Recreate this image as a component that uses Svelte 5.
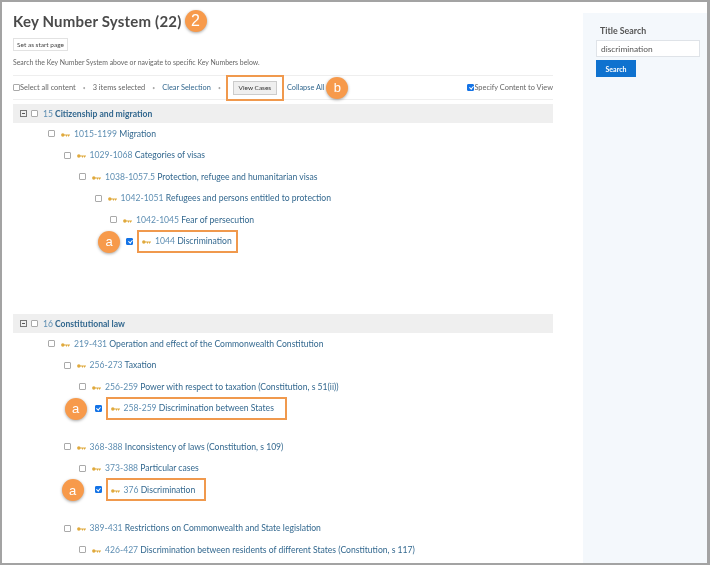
<script>
  const sections = [
    {
      num: "15",
      title: "Citizenship and migration",
      gapAfter: "wide",
      rows: [
        { level: 1, num: "1015-1199", label: "Migration" },
        { level: 2, num: "1029-1068", label: "Categories of visas" },
        { level: 3, num: "1038-1057.5", label: "Protection, refugee and humanitarian visas" },
        { level: 4, num: "1042-1051", label: "Refugees and persons entitled to protection" },
        { level: 5, num: "1042-1045", label: "Fear of persecution" },
        { level: 6, num: "1044", label: "Discrimination", checked: true, boxWidth: 101, badgeLeft: -41 }
      ]
    },
    {
      num: "16",
      title: "Constitutional law",
      rows: [
        { level: 1, num: "219-431", label: "Operation and effect of the Commonwealth Constitution" },
        { level: 2, num: "256-273", label: "Taxation" },
        { level: 3, num: "256-259", label: "Power with respect to taxation (Constitution, s 51(ii))" },
        { level: 4, num: "258-259", label: "Discrimination between States", checked: true, boxWidth: 181, badgeLeft: -43, spaced: true },
        { level: 2, num: "368-388", label: "Inconsistency of laws (Constitution, s 109)" },
        { level: 3, num: "373-388", label: "Particular cases" },
        { level: 4, num: "376", label: "Discrimination", checked: true, boxWidth: 100, badgeLeft: -46, spaced: true },
        { level: 2, num: "389-431", label: "Restrictions on Commonwealth and State legislation" },
        { level: 3, num: "426-427", label: "Discrimination between residents of different States (Constitution, s 117)" }
      ]
    }
  ];
</script>

{#snippet key()}
  <svg class="key" width="9" height="6" viewBox="0 0 9 6" aria-hidden="true">
    <circle cx="1.8" cy="3" r="1.7" fill="#e0a93c" />
    <path d="M3 2.4h6v1.2H8V4.6H7V3.6H6v1H5v-1H3z" fill="#e0a93c" />
  </svg>
{/snippet}

<div class="frame">
  <main class="content">
    <h1>Key Number System (22) <span class="badge title-badge">2</span></h1>
    <button class="start">Set as start page</button>
    <p class="intro">Search the Key Number System above or navigate to specific Key Numbers below.</p>

    <div class="toolbar">
      <label class="tool muted"><input type="checkbox" />Select all content</label>
      <span class="dot">•</span>
      <span class="muted">3 items selected</span>
      <span class="dot">•</span>
      <a href="#clear">Clear Selection</a>
      <span class="dot">•</span>
      <span class="view-box"><button class="view">View Cases</button></span>
      <a href="#collapse">Collapse All</a>
      <span class="badge">b</span>
      <label class="tool muted specify"><input type="checkbox" checked />Specify Content to View</label>
    </div>

    {#each sections as section}
      <section class:wide={section.gapAfter === "wide"}>
        <div class="head">
          <span class="minus"></span>
          <input type="checkbox" />
          <a href="#s" class="num">{section.num}</a>
          <a href="#s" class="head-title">{section.title}</a>
        </div>
        {#each section.rows as row}
          <div class="row l{row.level}" class:spaced={row.spaced}>
            <input type="checkbox" checked={row.checked} />
            {#if row.checked}
              <div class="picked" style="width: {row.boxWidth}px">
                <span class="badge row-badge" style="left: {row.badgeLeft}px">a</span>
                {@render key()}
                <a href="#r"><span class="num">{row.num}</span> {row.label}</a>
              </div>
            {:else}
              {@render key()}
              <a href="#r"><span class="num">{row.num}</span> {row.label}</a>
            {/if}
          </div>
        {/each}
      </section>
    {/each}
  </main>

  <aside class="side">
    <h2>Title Search</h2>
    <input class="search" type="text" value="discrimination" />
    <button class="go">Search</button>
  </aside>
</div>

<style>
  :global(body) {
    margin: 0;
    background: #fff;
  }

  .frame {
    box-sizing: border-box;
    width: 710px;
    height: 565px;
    overflow: hidden;
    border: 2px solid #a3a3a3;
    border-right-width: 3px;
    display: flex;
    font-family: "Lato", "Open Sans", sans-serif;
    color: #555;
    filter: blur(0.25px);
  }

  .content {
    width: 540px;
    margin-left: 11px;
    flex: none;
  }

  h1 {
    margin: 0;
    padding-top: 7px;
    height: 24px;
    display: flex;
    align-items: center;
    gap: 3px;
    font-size: 15px;
    font-weight: 700;
    color: #4a4a4a;
    letter-spacing: 0.2px;
  }

  .badge {
    width: 22px;
    height: 22px;
    border-radius: 50%;
    background: #f79a4b;
    box-shadow: 0 1px 3px rgba(0, 0, 0, 0.35);
    color: #fff;
    font-family: "Liberation Sans", sans-serif;
    font-size: 13px;
    font-weight: 400;
    display: inline-flex;
    align-items: center;
    justify-content: center;
    flex: none;
  }

  .title-badge {
    font-size: 16px;
  }

  .start {
    display: block;
    margin: 5px 0 0;
    width: 55px;
    height: 13px;
    padding: 0;
    border: 1px solid #e2e2e2;
    background: #fff;
    font: 6.5px "Lato", sans-serif;
    color: #444;
  }

  .intro {
    margin: 7px 0 0;
    font-size: 6.9px;
    line-height: 9px;
    color: #666;
  }

  .toolbar {
    margin-top: 8px;
    height: 23px;
    border-top: 1px solid #eee;
    border-bottom: 1px solid #eee;
    display: flex;
    align-items: center;
    font-size: 7.4px;
    white-space: nowrap;
  }

  .toolbar input {
    margin: 0 5px 0 0;
  }

  .tool {
    display: flex;
    align-items: center;
  }

  .muted {
    color: #666;
  }

  .dot {
    width: 17px;
    text-align: center;
    font-size: 5px;
    color: #aaa;
  }

  .view-box {
    border: 2px solid #f0994d;
    padding: 4px 5px;
    margin-left: -2px;
    margin-right: 3px;
    display: flex;
    background: #fff;
  }

  .view {
    width: 44px;
    height: 14px;
    padding: 0;
    background: #efefef;
    border: 1px solid #ccc;
    font: 6.5px "Lato", sans-serif;
    color: #333;
  }

  .toolbar .badge {
    margin-left: 2px;
  }

  .specify {
    margin-left: auto;
  }

  a {
    color: #33688f;
    text-decoration: none;
  }

  input[type="checkbox"] {
    appearance: none;
    box-sizing: border-box;
    width: 7px;
    height: 7px;
    margin: 0;
    flex: none;
    border: 1px solid #aaa;
    border-radius: 1px;
    background: #fff;
    position: relative;
  }

  input[type="checkbox"]:checked {
    background: #1473e6;
    border-color: #1473e6;
  }

  input[type="checkbox"]:checked::after {
    content: "";
    position: absolute;
    left: 1.6px;
    top: 0.2px;
    width: 1.6px;
    height: 3px;
    border: solid #fff;
    border-width: 0 1px 1px 0;
    transform: rotate(40deg);
  }

  .head {
    margin-top: 4px;
    height: 19px;
    background: #efefef;
    display: flex;
    align-items: center;
    padding-left: 7px;
    font-size: 8.6px;
  }

  .minus {
    box-sizing: border-box;
    width: 7px;
    height: 7px;
    border: 1px solid #777;
    margin-right: 4px;
    position: relative;
  }

  .minus::after {
    content: "";
    position: absolute;
    left: 1px;
    right: 1px;
    top: 2px;
    height: 1px;
    background: #555;
  }

  .head .num {
    margin-left: 5px;
    margin-right: 2px;
  }

  .head-title {
    font-weight: 700;
  }

  .num {
    color: #5f8fb3;
  }

  section.wide {
    padding-bottom: 58px;
  }

  .row {
    height: 21.5px;
    display: flex;
    align-items: center;
    font-size: 8.6px;
    white-space: nowrap;
  }

  .row > .key {
    margin-left: 6px;
    margin-right: 4px;
  }

  .l1 { padding-left: 35px; }
  .l2 { padding-left: 50.5px; }
  .l3 { padding-left: 66px; }
  .l4 { padding-left: 81.5px; }
  .l5 { padding-left: 97px; }
  .l6 { padding-left: 113px; }

  .key {
    flex: none;
    margin-top: 2px;
  }

  .picked {
    box-sizing: border-box;
    height: 23px;
    margin-left: 4px;
    border: 2px solid #f0994d;
    padding-left: 3px;
    display: flex;
    align-items: center;
    gap: 4px;
    position: relative;
  }

  .row-badge {
    position: absolute;
    top: -1px;
  }

  .row.spaced {
    margin-bottom: 17px;
  }

  .side {
    box-sizing: border-box;
    width: 124px;
    margin-top: 11px;
    margin-left: 30px;
    background: #f4f8fc;
    padding: 12px 0 0 13px;
    flex: none;
  }

  h2 {
    margin: 0 0 3px 4px;
    font-size: 8.8px;
    line-height: 12px;
    font-weight: 700;
    color: #555;
  }

  .search {
    box-sizing: border-box;
    display: block;
    width: 104px;
    height: 17px;
    padding: 0 4px;
    border: 1px solid #dfe3e8;
    background: #fff;
    font: 8.4px "Lato", sans-serif;
    color: #555;
  }

  .go {
    display: block;
    margin-top: 3px;
    width: 40px;
    height: 17px;
    padding: 0;
    border: none;
    background: #0f72cf;
    color: #fff;
    font: 700 7px "Lato", sans-serif;
  }
</style>
